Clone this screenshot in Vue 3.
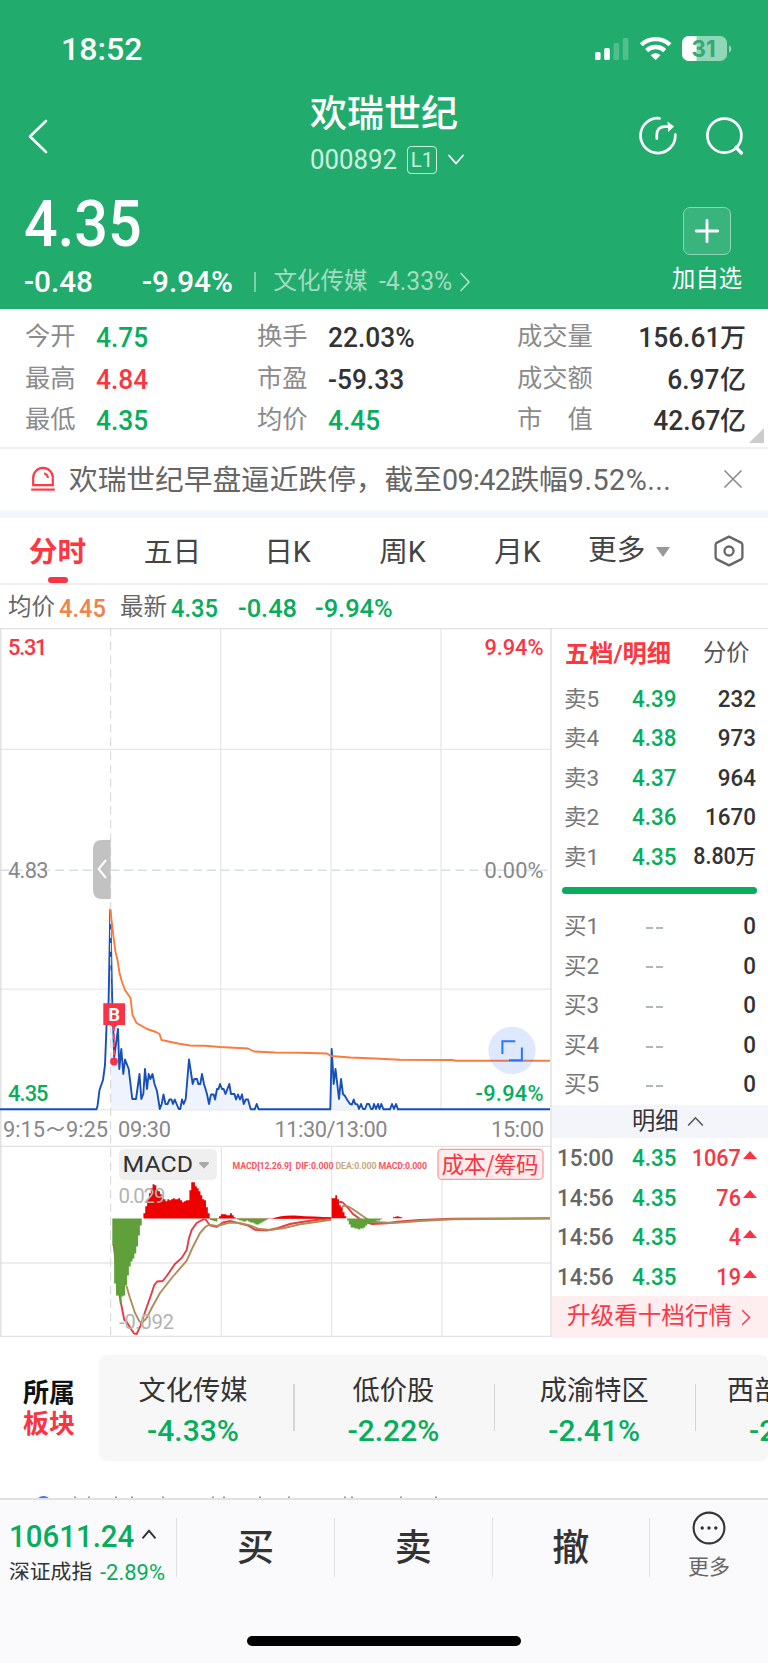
<template>
  <div class="stock-page">
    <header class="hero">
      <div class="status-bar">
        <span class="num clock">18:52</span>
        <svg class="status-icons" width="140" height="28" viewBox="0 0 140 28">
          <rect x="0" y="17" width="5.6" height="8" rx="1.6" fill="#fff" />
          <rect x="9.2" y="13" width="5.6" height="12" rx="1.6" fill="#fff" />
          <rect x="18.6" y="8" width="5.6" height="17" rx="1.6" fill="#fff" opacity=".22" />
          <rect x="27.8" y="3" width="5.6" height="22" rx="1.6" fill="#fff" opacity=".22" />
          <g fill="none" stroke="#fff" stroke-width="4.3">
            <path d="M46.3 9.8A21 21 0 0 1 75 9.8" />
            <path d="M51.6 15.6A13.2 13.2 0 0 1 69.7 15.6" />
          </g>
          <path d="M60.6 25L55.6 20.2A7.4 7.4 0 0 1 65.6 20.2Z" fill="#fff" />
          <clipPath id="battery"><rect x="87" y="1" width="45" height="25" rx="7" /></clipPath>
          <g clip-path="url(#battery)">
            <rect x="87" y="1" width="45" height="25" fill="#90d6b7" />
            <rect x="87" y="1" width="14.5" height="25" fill="#fff" />
          </g>
          <path d="M134 10.2a4 4 0 0 1 0 7.4z" fill="#90d6b7" />
          <text x="96.5" y="21.6" textLength="24" lengthAdjust="spacingAndGlyphs" class="battery-text">31</text>
        </svg>
      </div>

      <div class="nav">
        <svg class="back" width="24" height="36" viewBox="0 0 24 36">
          <path d="M20 3L4 18.5L20 34" class="line" stroke-width="2.6" />
        </svg>
        <div class="title">
          <h1>欢瑞世纪</h1>
          <div class="code">
            <span class="num code-num">000892</span>
            <span class="level">L1</span>
            <svg width="18" height="12" viewBox="0 0 18 12">
              <path d="M2 1.5L9 9.5L16 1.5" class="line" stroke-width="1.8" />
            </svg>
          </div>
        </div>
        <div class="nav-actions">
          <svg width="42" height="42" viewBox="0 0 42 42">
            <g class="line" stroke-width="2.7">
              <path d="M21.5 3.3A17.4 17.4 0 1 0 37.3 19.6" />
              <path d="M18.8 23.6V20C18.8 14.5 21.5 11.6 27 11.6H34" />
            </g>
            <path d="M29.5 6.5L36 11.6L30.2 17Z" fill="#fff" />
          </svg>
          <svg width="42" height="42" viewBox="0 0 42 42">
            <g class="line" stroke-width="2.7">
              <circle cx="20.4" cy="20.6" r="17" />
              <path d="M32 32.4L37.4 38" stroke-width="3.4" />
            </g>
          </svg>
        </div>
      </div>

      <div class="quote">
        <div class="quote-left">
          <div class="num price">4.35</div>
          <div class="change">
            <span class="num wide c1">-0.48</span>
            <span class="num wide c2">-9.94%</span>
            <i class="bar"></i>
            <span class="sector">文化传媒</span>
            <span class="num wide sector-pct">-4.33%</span>
            <svg width="12" height="20" viewBox="0 0 12 20">
              <path d="M2 1.5L10 10L2 18.5" class="line" stroke-width="1.6" opacity=".65" />
            </svg>
          </div>
        </div>
        <div class="watch">
          <div class="plus">
            <svg width="24" height="24" viewBox="0 0 24 24">
              <path d="M12 1.2V22.8M1.2 12H22.8" class="line" stroke-width="2.8" />
            </svg>
          </div>
          <span>加自选</span>
        </div>
      </div>
    </header>

    <section class="stats">
      <div v-for="row in stats" :key="row[0].label" class="stats-row">
        <template v-for="cell in row" :key="cell.label">
          <span class="label">{{ cell.label }}</span>
          <span class="value" :class="cell.tone"><b class="num">{{ cell.value }}</b><em v-if="cell.unit">{{ cell.unit }}</em></span>
        </template>
      </div>
      <i class="corner"></i>
    </section>

    <section class="alert">
      <svg width="28" height="28" viewBox="0 0 28 28">
        <g fill="none" stroke="#fd3a48" stroke-width="2.2">
          <path d="M4.2 20.2V12.6A9.8 9.8 0 0 1 23.8 12.6V20.2Z" />
          <path d="M2.2 24.6H25.8" />
          <path d="M15.2 8.2Q18.6 9.4 19 13" stroke-width="2" />
        </g>
      </svg>
      <p>欢瑞世纪早盘逼近跌停，截至<b class="a1">09:42</b>跌幅<b class="a2">9.52%...</b></p>
      <svg width="20" height="20" viewBox="0 0 20 20">
        <path d="M1.5 1.5L18.5 18.5M18.5 1.5L1.5 18.5" fill="none" stroke="#8a8a8a" stroke-width="1.6" />
      </svg>
    </section>

    <nav class="tabs">
      <span v-for="(tab, i) in tabs" :key="tab" class="tab" :class="{ active: i === 0 }">{{ tab }}</span>
      <span class="tab more">更多<i class="caret"></i></span>
      <svg width="32" height="34" viewBox="0 0 32 34">
        <g fill="none" stroke="#666" stroke-width="2.3">
          <path d="M16 2.6L28 8.6Q29.4 9.4 29.4 11V23Q29.4 24.6 28 25.4L16 31.4L4 25.4Q2.6 24.6 2.6 23V11Q2.6 9.4 4 8.6Z" stroke-linejoin="round" />
          <circle cx="16" cy="17" r="4.5" />
        </g>
      </svg>
    </nav>

    <div class="legend">
      <span>均价</span><b class="num orange">4.45</b>
      <span>最新</span><b class="num green">4.35</b>
      <b class="num wide green">-0.48</b>
      <b class="num wide green">-9.94%</b>
    </div>

    <main class="market">
      <svg class="chart" width="552" height="709" viewBox="0 628 552 709">
        <!-- grid -->
        <g stroke="#e7e7e7" stroke-width="1.3" fill="none">
          <path d="M0 628.6H552M0 1146.3H552M0 1336.3H552" stroke="#e2e2e2" />
          <path d="M0 749.3H551M0 989.2H551M0 1109.8H551M0 1263H551" />
          <path d="M220.6 628V1110M331 628V1110M441 628V1110M221.4 1146V1336M331.6 1146V1336M442 1146V1336" />
          <path d="M.8 628V1336M551 628V1336" stroke="#dedede" />
        </g>

        <path :d="priceArea" fill="#eef3fd" />
        <polyline :points="toPoints(price)" fill="none" stroke="#1750b8" stroke-width="1.9" stroke-linejoin="round" />
        <path d="M110.6 628V1336" stroke="#dcdcdc" stroke-width="1.2" stroke-dasharray="8.6 5.1" />
        <path d="M0 870.3H551" stroke="#d3dfea" stroke-width="1.6" stroke-dasharray="9 4.8" />
        <polyline :points="toPoints(average)" fill="none" stroke="#fb7a3c" stroke-width="1.9" stroke-linejoin="round" />

        <g class="axis">
          <text x="8" y="654.6" textLength="39.5" class="up">5.31</text>
          <text x="484.5" y="654.6" textLength="59" class="up">9.94%</text>
          <text x="8" y="878" textLength="40.5" class="flat">4.83</text>
          <text x="484.5" y="878" textLength="59" class="flat">0.00%</text>
          <text x="8" y="1101" textLength="40.5" class="down">4.35</text>
          <text x="475.5" y="1101" textLength="68" class="down">-9.94%</text>
          <text x="3" y="1136.7" textLength="42" class="flat">9:15</text>
          <text x="66" y="1136.7" textLength="42" class="flat">9:25</text>
          <text x="118" y="1136.7" textLength="53" class="flat">09:30</text>
          <text x="274.5" y="1136.7" textLength="113" class="flat">11:30/13:00</text>
          <text x="491" y="1136.7" textLength="53" class="flat">15:00</text>
        </g>
        <path d="M47.5 1131Q51 1126 55.5 1129Q60 1132 63.5 1127" fill="none" stroke="#888" stroke-width="1.7" />

        <!-- auction handle -->
        <path d="M110.6 840H102Q93 840 93 849V890Q93 899 102 899H110.6Z" fill="#c2c2c2" />
        <path d="M106 860L98.6 869L106 878" fill="none" stroke="#fff" stroke-width="2" />

        <!-- buy marker -->
        <path d="M114 1026V1058" stroke="#f8495a" stroke-width="2" stroke-dasharray="5 3" />
        <path d="M103.3 1003.3H125V1025H118L114 1028L110 1025H103.3Z" fill="#f93346" />
        <text x="108.2" y="1021.2" class="marker">B</text>
        <circle cx="114" cy="1061.5" r="3.9" fill="#f93346" />

        <circle cx="512" cy="1050.5" r="23.7" fill="#3d7dff" fill-opacity=".17" />
        <path d="M502.4 1054V1041.3H515.3M521.9 1047.5V1060.2H509" fill="none" stroke="#2b77fa" stroke-width="2" />

        <!-- macd -->
        <polyline :points="toPoints(dif)" fill="none" stroke="#e83b43" stroke-width="1.9" />
        <polyline :points="toPoints(dif2)" fill="none" stroke="#e83b43" stroke-width="1.9" />
        <polyline :points="toPoints(dea)" fill="none" stroke="#b08d57" stroke-width="1.9" />
        <polyline :points="toPoints(dea2)" fill="none" stroke="#b08d57" stroke-width="1.9" />
        <path d="M144 1218.4H331" stroke="#f2868a" stroke-width=".8" />
        <path v-for="(bars, i) in histogram" :key="i" :d="barPath(bars)" :fill="bars.up ? '#ee0000' : '#5fa03a'" />
        <path d="M272 1218.7Q282 1215 295 1215.6Q315 1217 331.5 1217.2V1218.8Z" fill="#ee0000" />

        <rect x="119" y="1149" width="98" height="31" rx="5" fill="#efefef" />
        <text x="122.6" y="1172" textLength="70.5" lengthAdjust="spacingAndGlyphs" class="macd-name">MACD</text>
        <path d="M199.5 1162H208.5Q209.5 1163 208.5 1164L204 1168.6L199.5 1164Q198.5 1163 199.5 1162Z" fill="#aaa" />
        <g class="macd-info">
          <text x="232.5" y="1169" textLength="59">MACD[12.26.9]</text>
          <text x="295.5" y="1169" textLength="38">DIF:0.000</text>
          <text x="335.5" y="1169" textLength="41" class="dea">DEA:0.000</text>
          <text x="378.5" y="1169" textLength="48.5">MACD:0.000</text>
        </g>
        <rect x="438" y="1149.4" width="105" height="30" rx="4" fill="#ffecec" stroke="#fb9a9e" stroke-width="1.3" />
        <text x="441.5" y="1173" textLength="97" class="cost">成本/筹码</text>
        <text x="118.5" y="1202.7" textLength="47" class="macd-axis">0.029</text>
        <text x="119" y="1328.7" textLength="55" class="macd-axis">-0.092</text>
      </svg>

      <aside class="book">
        <div class="book-tabs"><b>五档/明细</b><span>分价</span></div>
        <div v-for="row in asks" :key="row.label" class="book-row">
          <span class="side">{{ row.label }}</span>
          <b class="num green">{{ row.price }}</b>
          <span class="qty"><b class="num">{{ row.qty }}</b><em v-if="row.unit">{{ row.unit }}</em></span>
        </div>
        <div class="ratio"></div>
        <div v-for="n in 5" :key="n" class="book-row">
          <span class="side">买{{ n }}</span>
          <span class="empty"><i></i><i></i></span>
          <span class="qty"><b class="num">0</b></span>
        </div>
        <div class="detail-head">
          明细
          <svg width="17" height="11" viewBox="0 0 17 11">
            <path d="M1.2 9.5L8.5 1.8L15.8 9.5" fill="none" stroke="#555" stroke-width="1.6" />
          </svg>
        </div>
        <div v-for="(t, i) in trades" :key="i" class="book-row trade">
          <span class="num time">{{ t.time }}</span>
          <b class="num green">4.35</b>
          <span class="qty red"><b class="num">{{ t.qty }}</b><i class="tri"></i></span>
        </div>
        <div class="upgrade">
          升级看十档行情
          <svg width="10" height="17" viewBox="0 0 10 17">
            <path d="M1.2 1.2L8.6 8.5L1.2 15.8" fill="none" stroke="#fb3847" stroke-width="1.5" />
          </svg>
        </div>
      </aside>
    </main>

    <section class="sectors">
      <div class="sectors-title">所属<br /><em>板块</em></div>
      <div class="sectors-card">
        <div v-for="s in sectors" :key="s.name" class="sector-item">
          <span>{{ s.name }}</span>
          <b class="num wide green">{{ s.pct }}</b>
        </div>
      </div>
    </section>

    <!-- top edge of the next row, hidden behind the trade bar -->
    <svg class="peek" width="768" height="3" viewBox="0 0 768 3">
      <path d="M38 3Q43.5 -1 49 3Z" fill="#3f74f5" />
      <path d="M75 1.5V3M89 1.5V3M116 1.5V3M132 1.5V3M163 1.5V3M213 1.5V3M224 1.5V3M260 1.5V3M289 1.5V3M345 1.5V3M352 1.5V3M401 1.5V3M436 1.5V3" stroke="#999" stroke-width="2" />
    </svg>

    <footer class="trade-bar">
      <div class="actions">
        <div class="index">
          <div class="index-top">
            <b class="num green">10611.24</b>
            <svg width="16" height="11" viewBox="0 0 16 11">
              <path d="M1.5 9.3L8 1.8L14.5 9.3" fill="none" stroke="#333" stroke-width="1.9" />
            </svg>
          </div>
          <div class="index-sub"><span>深证成指</span><b class="num wide green">-2.89%</b></div>
        </div>
        <div v-for="a in ['买', '卖', '撤']" :key="a" class="action">{{ a }}</div>
        <div class="action-more">
          <svg width="36" height="36" viewBox="0 0 36 36">
            <circle cx="18" cy="18" r="15.4" fill="none" stroke="#333" stroke-width="2.1" />
            <circle cx="11.2" cy="18" r="1.7" fill="#333" />
            <circle cx="18" cy="18" r="1.7" fill="#333" />
            <circle cx="24.8" cy="18" r="1.7" fill="#333" />
          </svg>
          <span>更多</span>
        </div>
      </div>
      <div class="home-indicator"></div>
    </footer>
  </div>
</template>

<script setup>
import { computed } from 'vue'

const stats = [
  [
    { label: '今开', value: '4.75', tone: 'green' },
    { label: '换手', value: '22.03%' },
    { label: '成交量', value: '156.61', unit: '万' }
  ],
  [
    { label: '最高', value: '4.84', tone: 'red' },
    { label: '市盈', value: '-59.33' },
    { label: '成交额', value: '6.97', unit: '亿' }
  ],
  [
    { label: '最低', value: '4.35', tone: 'green' },
    { label: '均价', value: '4.45', tone: 'green' },
    { label: '市　值', value: '42.67', unit: '亿' }
  ]
]

const tabs = ['分时', '五日', '日K', '周K', '月K']

const asks = [
  { label: '卖5', price: '4.39', qty: '232' },
  { label: '卖4', price: '4.38', qty: '973' },
  { label: '卖3', price: '4.37', qty: '964' },
  { label: '卖2', price: '4.36', qty: '1670' },
  { label: '卖1', price: '4.35', qty: '8.80', unit: '万' }
]

const trades = [
  { time: '15:00', qty: 1067 },
  { time: '14:56', qty: 76 },
  { time: '14:56', qty: 4 },
  { time: '14:56', qty: 19 }
]

const sectors = [
  { name: '文化传媒', pct: '-4.33%' },
  { name: '低价股', pct: '-2.22%' },
  { name: '成渝特区', pct: '-2.41%' },
  { name: '西部大开发', pct: '-2.35%' }
]

// flat list of x, y pairs
const price = [
  0, 1109.3, 96.5, 1109.3, 97.5, 1106, 99.5, 1090, 103, 1080, 105, 1065, 106.5, 1027, 108.6, 1001,
  110.3, 909.5, 112.2, 1001, 113.3, 1029, 114.2, 1057, 118, 1029, 119.3, 1069, 121.3, 1049, 123.3, 1074,
  125, 1059.5, 128.7, 1069, 132.3, 1099, 136, 1099, 139.5, 1074, 141.3, 1099, 143.3, 1094, 145, 1069,
  147, 1089, 148.7, 1074, 150.3, 1079, 152.5, 1074, 154.5, 1084, 157, 1091, 159.8, 1109, 161.7, 1104,
  163.5, 1094.5, 165.5, 1104, 167.5, 1104, 169.5, 1099.5, 171.5, 1099.5, 173, 1104, 174.7, 1099.5,
  178.7, 1109, 180.3, 1109, 182, 1099.5, 183.7, 1104, 185.7, 1099, 189, 1059.5, 192.7, 1084, 194.3, 1079,
  197, 1079, 198.3, 1084, 200.3, 1084, 202, 1074, 204, 1084, 207, 1094, 209, 1104, 211, 1094.5,
  213.7, 1094.5, 215, 1099.5, 217, 1089, 218.5, 1089, 220, 1084, 222, 1089, 223.7, 1089, 225.5, 1094,
  229.3, 1084, 231, 1094, 234.5, 1094, 236, 1099.5, 238, 1094.5, 240, 1099.5, 242, 1094.5, 243.7, 1104,
  245.7, 1099.5, 248, 1099.5, 250.7, 1109.3, 254.7, 1109.3, 256.7, 1104, 258.7, 1109.3, 330.3, 1109.3,
  331.7, 1049, 333.7, 1084, 335.5, 1069, 339, 1099, 341, 1079, 343, 1094, 345, 1096, 347, 1099.5,
  350, 1104, 352, 1104.5, 353.7, 1099.5, 355.3, 1104, 357.5, 1104.5, 359, 1109, 361, 1104, 363, 1109,
  365, 1109, 367, 1104, 369, 1104, 371, 1109, 372.7, 1109, 374, 1104, 376, 1109, 378, 1104, 379.5, 1109,
  381.3, 1104, 383.5, 1109.3, 390, 1109.3, 392, 1104, 394, 1109, 396, 1104, 398, 1109.3, 550, 1109.3
]

const average = [
  110.3, 909.5, 113.5, 937, 115.5, 952, 117.5, 960, 119.5, 973, 122, 982, 125, 990, 130.5, 998,
  132.5, 1015, 136.5, 1023, 147, 1029, 156, 1032, 159.5, 1034, 161.5, 1040, 178, 1043.5, 190, 1045.5,
  205, 1045.8, 220, 1047, 248, 1048.5, 254, 1051.5, 275, 1052.5, 300, 1052.7, 327, 1053.5, 331, 1056,
  350, 1057.5, 375, 1058.5, 400, 1059.8, 452, 1060, 456, 1060.8, 550, 1060.8
]

const dif = [
  113.7, 1245, 119.5, 1295, 121.7, 1307, 124.3, 1320, 126.7, 1322, 131.7, 1330, 134, 1333.5, 136.7, 1334,
  140, 1327, 142.7, 1319, 145.7, 1310, 151.7, 1293, 154.3, 1285, 157.3, 1281.5, 162.7, 1281, 166.7, 1276,
  175, 1264, 181.7, 1258, 186.7, 1250, 189, 1238, 191.7, 1230, 196.7, 1223, 204, 1219, 206, 1220,
  210, 1225.5, 216.7, 1227, 223, 1222.5, 230, 1221, 236.7, 1222.7, 248, 1225.5, 255, 1229.7, 267, 1230.5,
  278, 1228, 290, 1224, 300, 1222.3, 316, 1220, 331, 1218.6
]
const dif2 = [
  339, 1202.3, 341, 1201.8, 343, 1202.7, 348, 1208, 353, 1214, 360, 1219, 366, 1222, 372, 1224,
  387, 1223.3, 397, 1221.7, 420, 1220, 453, 1218.7, 550, 1218.3
]
const dea = [
  126.5, 1286, 130, 1298, 135, 1313, 139.5, 1321.7, 142.7, 1322, 146.7, 1318, 151.7, 1308, 160, 1293,
  171.7, 1278, 186.7, 1260.7, 193, 1246.7, 200, 1233, 205, 1227.3, 209, 1224.7, 216.7, 1226, 230, 1222.7,
  238, 1222.7, 250, 1225.3, 258, 1228.7, 270, 1230, 283, 1228.3, 300, 1224.3, 316, 1222, 331, 1219.8
]
const dea2 = [
  341.7, 1206.7, 345, 1205.7, 348, 1206.3, 353, 1209.3, 366.7, 1218.7, 371.7, 1221.7, 393, 1223,
  420, 1221, 453, 1219.3, 550, 1218.6
]

const histogram = [
  { x: 112.3, up: false, values: [27, 65, 77, 77, 85, 78, 77, 67, 57, 48, 43, 40, 35, 28, 17, 7] },
  {
    x: 143.4,
    up: true,
    values: [5, 12, 19, 25, 30, 34, 33, 29, 27, 24, 20, 19, 17, 19, 18, 19, 20, 19, 19, 20, 18, 16, 17, 18, 18, 28, 36, 36, 32, 30, 27, 23, 19, 18, 11, 5]
  },
  { x: 210, up: false, values: [1.5, 2, 2.5, 3] },
  { x: 219, up: true, values: [2, 4, 4, 4, 3, 3, 5, 3, 1] },
  { x: 237, up: false, values: [1, 2, 2, 3, 3, 2, 3, 4, 4, 5, 6, 6, 5, 4, 3, 2, 1] },
  { x: 331.6, up: true, values: [20, 20, 23, 19, 13, 11, 6, 2] },
  { x: 347, up: false, values: [2, 6, 9, 9, 10, 10, 11, 10, 10, 9, 7, 5, 5, 4, 4, 3, 2, 2, 1] },
  { x: 393, up: true, values: [1, 1.5, 2, 1.5, 1] }
]

const toPoints = (list) => list.join(' ')

const priceArea = computed(() => {
  const inside = []
  for (let i = 0; i < price.length; i += 2) {
    if (price[i] > 111) inside.push(`${price[i]} ${price[i + 1]}`)
  }
  return `M111 1109L111 960L${inside.join('L')}Z`
})

const barPath = ({ x, up, values }) => {
  const step = 1.84
  const zero = up ? 1218.2 : 1218.6
  let d = `M${x} ${zero}`
  values.forEach((v, i) => {
    d += `V${up ? zero - v : zero + v}H${(x + (i + 1) * step).toFixed(2)}`
  })
  return `${d}V${zero}Z`
}
</script>

<style>
body {
  background: #fff;
}
</style>

<style scoped>
.stock-page {
  width: 768px;
  height: 1663px;
  overflow: hidden;
  display: flex;
  flex-direction: column;
  background: #fff;
  color: #333;
  font-family: Roboto, "Noto Sans CJK SC", sans-serif;
  line-height: 1;
}

.stock-page * {
  box-sizing: border-box;
}

em,
i {
  font-style: normal;
}

.num {
  display: inline-block;
  font-weight: 500;
  white-space: nowrap;
  transform: scaleX(0.92);
  transform-origin: left center;
}

.num.wide {
  transform: scaleX(0.99);
}

.green {
  color: #07ad5d;
}

.red {
  color: #fb3442;
}

.orange {
  color: #f0824a;
}

.line {
  fill: none;
  stroke: #fff;
  stroke-linecap: round;
  stroke-linejoin: round;
}

/* header */
.hero {
  height: 309px;
  flex: none;
  display: flex;
  flex-direction: column;
  background: #21ac6e;
  color: #fff;
}

.status-bar {
  height: 82px;
  padding: 35px 33px 0 61px;
  display: flex;
  justify-content: space-between;
}

.clock {
  font-size: 31.5px;
  line-height: 30px;
  transform: scaleX(1.02);
}

.battery-text {
  font: 700 22.5px Inter, sans-serif;
  fill: #35a873;
}

.nav {
  height: 108px;
  padding: 0 22px 0 26px;
  display: grid;
  grid-template-columns: 1fr 150px 1fr;
  align-items: center;
}

.title {
  display: flex;
  flex-direction: column;
  align-items: flex-start;
  margin: -7px 0 0 -1px;
}

.title h1 {
  margin: 0;
  height: 54px;
  line-height: 50px;
  font-size: 37px;
  font-weight: 500;
  white-space: nowrap;
}

.code {
  height: 32px;
  display: flex;
  align-items: center;
  color: #d0efe1;
}

.code-num {
  width: 97px;
  font-size: 28px;
  font-weight: 400;
}

.level {
  width: 30px;
  height: 28px;
  margin-right: 10px;
  flex: none;
  border: 1.5px solid #cdeedf;
  border-radius: 4px;
  text-align: center;
  font-size: 20.5px;
  line-height: 26px;
}

.code svg {
  flex: none;
}

.nav-actions {
  display: flex;
  justify-content: flex-end;
  gap: 24px;
}

.quote {
  flex: 1;
  display: flex;
  justify-content: space-between;
  padding: 0 26px 0 24px;
}

.price {
  height: 70px;
  line-height: 69px;
  font-size: 64.5px;
}

.change {
  display: flex;
  align-items: center;
  height: 43px;
}

.change .num {
  font-size: 30px;
}

.c1 {
  width: 118px;
}

.c2 {
  width: 112px;
}

.bar {
  width: 1.5px;
  height: 20px;
  margin-right: 18px;
  background: #7fd0ab;
}

.sector {
  width: 105px;
  font-size: 23.5px;
  color: #a3dcc2;
}

.change .sector-pct {
  width: 80px;
  font-size: 25px;
  font-weight: 400;
  color: #a3dcc2;
}

.watch {
  display: flex;
  flex-direction: column;
  align-items: center;
  padding-top: 17px;
  font-size: 23.3px;
}

.watch span {
  margin-top: 13px;
}

.plus {
  width: 48px;
  height: 48px;
  display: flex;
  align-items: center;
  justify-content: center;
  border: 1px solid #8fd5b5;
  border-radius: 7px;
  background: #39b47d;
}

/* stats */
.stats {
  position: relative;
  height: 140px;
  flex: none;
  padding: 7px 22px 0 25px;
  border-bottom: 2px solid #f1f1f1;
}

.stats-row {
  display: grid;
  grid-template-columns: 71px 161px 71px 189px 90px 1fr;
  align-items: center;
  height: 41.5px;
}

.stats .label {
  font-size: 25.3px;
  color: #8b8b8b;
  white-space: nowrap;
}

.stats .value {
  display: flex;
  align-items: center;
  font-size: 28px;
  padding-top: 3px;
}

.stats .value .num {
  transform: scaleX(0.94);
}

.stats .value:last-child {
  justify-content: flex-end;
}

.stats .value:last-child .num {
  transform-origin: right center;
}

.value em {
  font-size: 26px;
  font-weight: 500;
}

.corner {
  position: absolute;
  right: 4px;
  bottom: 4px;
  border-style: solid;
  border-width: 0 0 15px 15px;
  border-color: transparent transparent #ccc transparent;
}

.alert {
  height: 69px;
  flex: none;
  display: flex;
  align-items: center;
  padding: 0 25px 0 29px;
  border-bottom: 8px solid #f3f6fb;
}

.alert svg {
  margin-top: -2px;
}

.alert p {
  flex: 1;
  margin: 1px 0 0 12px;
  font-size: 28.7px;
  color: #666;
  white-space: nowrap;
}

.alert b {
  font-weight: 400;
}

.a1 {
  letter-spacing: -0.6px;
}

.a2 {
  letter-spacing: 0.5px;
}

/* tabs */
.tabs {
  height: 67px;
  flex: none;
  display: grid;
  grid-template-columns: 115px 115px 115px 115px 115px 112px 1fr;
  align-items: center;
  border-bottom: 2px solid #efefef;
}

.tab {
  position: relative;
  height: 65px;
  line-height: 69px;
  font-size: 28.7px;
  text-align: center;
  color: #444;
}

.tab.active {
  font-weight: 700;
  color: #fd3640;
}

.tab.active::after {
  content: "";
  position: absolute;
  left: 48px;
  bottom: 0;
  width: 20px;
  height: 6px;
  border-radius: 3px;
  background: #fb3442;
}

.tab.more {
  display: flex;
  align-items: center;
  padding-left: 13px;
}

.caret {
  margin: 2px 0 0 11px;
  border-style: solid;
  border-width: 10px 7.5px 0;
  border-color: #999 transparent transparent;
}

.tabs > svg {
  margin-left: 26px;
}

.legend {
  height: 43px;
  flex: none;
  display: grid;
  grid-template-columns: 51px 61px 51px 67px 77px 1fr;
  align-items: center;
  padding: 2px 0 0 8px;
  font-size: 23.5px;
  color: #666;
}

.legend .num {
  padding-top: 3px;
  font-size: 25.7px;
}

/* chart */
.market {
  height: 709px;
  flex: none;
  display: flex;
}

.chart {
  display: block;
  flex: none;
}

.axis text {
  font: 500 21.8px Roboto, sans-serif;
}

.axis .up {
  fill: #fb3442;
}

.axis .down {
  fill: #07ad5d;
}

.axis .flat {
  fill: #888;
  font-weight: 400;
}

.marker {
  font: 700 18.5px Roboto, sans-serif;
  fill: #fff;
}

.macd-name {
  font: 400 22.5px Roboto, sans-serif;
  fill: #333;
}

.macd-info {
  font: 700 8.8px Roboto, sans-serif;
  fill: #fb5560;
}

.macd-info .dea {
  fill: #c4ab85;
}

.cost {
  font: 400 22.5px "Noto Sans CJK SC", sans-serif;
  fill: #fb3442;
}

.macd-axis {
  font: 400 20.5px Roboto, sans-serif;
  fill: #b3b3b3;
}

.book {
  flex: 1;
  border-top: 1.5px solid #e2e2e2;
}

.book-tabs {
  height: 50px;
  display: flex;
  align-items: center;
  gap: 32px;
  padding-left: 13px;
  font-size: 23.3px;
  color: #555;
  white-space: nowrap;
}

.book-tabs b {
  font-size: 24.2px;
  font-weight: 600;
  color: #fd3640;
}

.book-row {
  height: 39.6px;
  display: grid;
  grid-template-columns: 68px 52px 1fr;
  align-items: center;
  padding: 0 12px 0 12px;
  font-size: 24.6px;
}

.side {
  font-size: 22.5px;
  color: #777;
}

.book-row .num {
  transform: scaleX(0.91);
}

.qty {
  display: flex;
  align-items: center;
  justify-content: flex-end;
}

.qty .num {
  transform-origin: right center;
}

.qty em {
  font-size: 20.5px;
  font-weight: 500;
}

.qty .num:not(:last-child) {
  font-size: 23.6px;
}

.ratio {
  height: 6.6px;
  margin: 10.5px 11px 12.5px 10px;
  border-radius: 4px;
  background: #07ad5d;
}

.empty {
  display: flex;
  gap: 3px;
  padding: 3px 0 0 14px;
}

.empty i {
  width: 7px;
  height: 2px;
  background: #b0b7c0;
}

.detail-head {
  height: 33.5px;
  display: flex;
  align-items: center;
  gap: 8px;
  padding-left: 80px;
  background: #f3f5fa;
  font-size: 23.3px;
}

.trade {
  padding: 1px 11px 0 5px;
  grid-template-columns: 75px 52px 1fr;
}

.trade .qty .num {
  font-size: 24.6px;
  transform: scaleX(0.88);
}

.time {
  color: #666;
}

.tri {
  margin: -7px 0 0 2px;
  border-style: solid;
  border-width: 0 7px 8.5px;
  border-color: transparent transparent #fb3442;
}

.upgrade {
  height: 41.5px;
  display: flex;
  align-items: center;
  gap: 9px;
  padding-left: 15px;
  background: #ffeef0;
  font-size: 23.6px;
  color: #fb3847;
  white-space: nowrap;
}

/* sectors */
.sectors {
  height: 160px;
  flex: none;
  display: flex;
  padding-top: 17.5px;
}

.sectors-title {
  width: 99px;
  flex: none;
  padding: 23px 0 0 23px;
  font-size: 26px;
  font-weight: 700;
  line-height: 31px;
  color: #111;
}

.sectors-title em {
  color: #fb3442;
}

.sectors-card {
  width: 669px;
  height: 106px;
  display: flex;
  overflow: hidden;
  border-radius: 8px;
  background: #f7f7f7;
}

.sector-item {
  position: relative;
  width: 200.8px;
  flex: none;
  display: flex;
  flex-direction: column;
  align-items: center;
  gap: 11px;
  padding-top: 23px;
  font-size: 27.2px;
}

.sector-item:first-child {
  width: 194px;
  padding-right: 6px;
}

.sector-item .num {
  font-size: 30px;
  transform: scaleX(1);
  transform-origin: center;
}

.sector-item + .sector-item::before {
  content: "";
  position: absolute;
  left: 0;
  top: 29px;
  width: 1.5px;
  height: 47px;
  background: #d5d5d5;
}

.peek {
  display: block;
  flex: none;
  margin-top: -2px;
}

/* trade bar */
.trade-bar {
  flex: 1;
  display: flex;
  flex-direction: column;
  border-top: 2px solid #e1e1e3;
  background: #fafafc;
}

.actions {
  display: grid;
  grid-template-columns: 176px 158px 157.5px 157.5px 1fr;
  height: 84px;
  padding-top: 18px;
}

.actions > div + div {
  height: 59px;
  border-left: 1.5px solid #e0e0e2;
}

.index {
  padding: 1px 0 0 9px;
}

.index-top {
  display: flex;
  align-items: center;
  height: 33px;
}

.index-top .num {
  width: 132px;
  font-size: 32px;
}

.index-top svg {
  margin-top: -2px;
}

.index-sub {
  display: flex;
  align-items: center;
  margin-top: 9px;
  font-size: 20.8px;
}

.index-sub .num {
  margin-left: 8px;
  font-size: 22.2px;
  font-weight: 400;
}

.action {
  text-align: center;
  font-size: 37px;
  font-weight: 500;
  line-height: 61px;
}

.action-more {
  display: flex;
  flex-direction: column;
  align-items: center;
  font-size: 21px;
  color: #666;
}

.action-more svg {
  flex: none;
  margin-top: -8px;
}

.action-more span {
  margin-top: 11px;
}

.home-indicator {
  width: 274px;
  height: 10px;
  margin: 52px auto 0;
  border-radius: 5px;
  background: #000;
}
</style>
